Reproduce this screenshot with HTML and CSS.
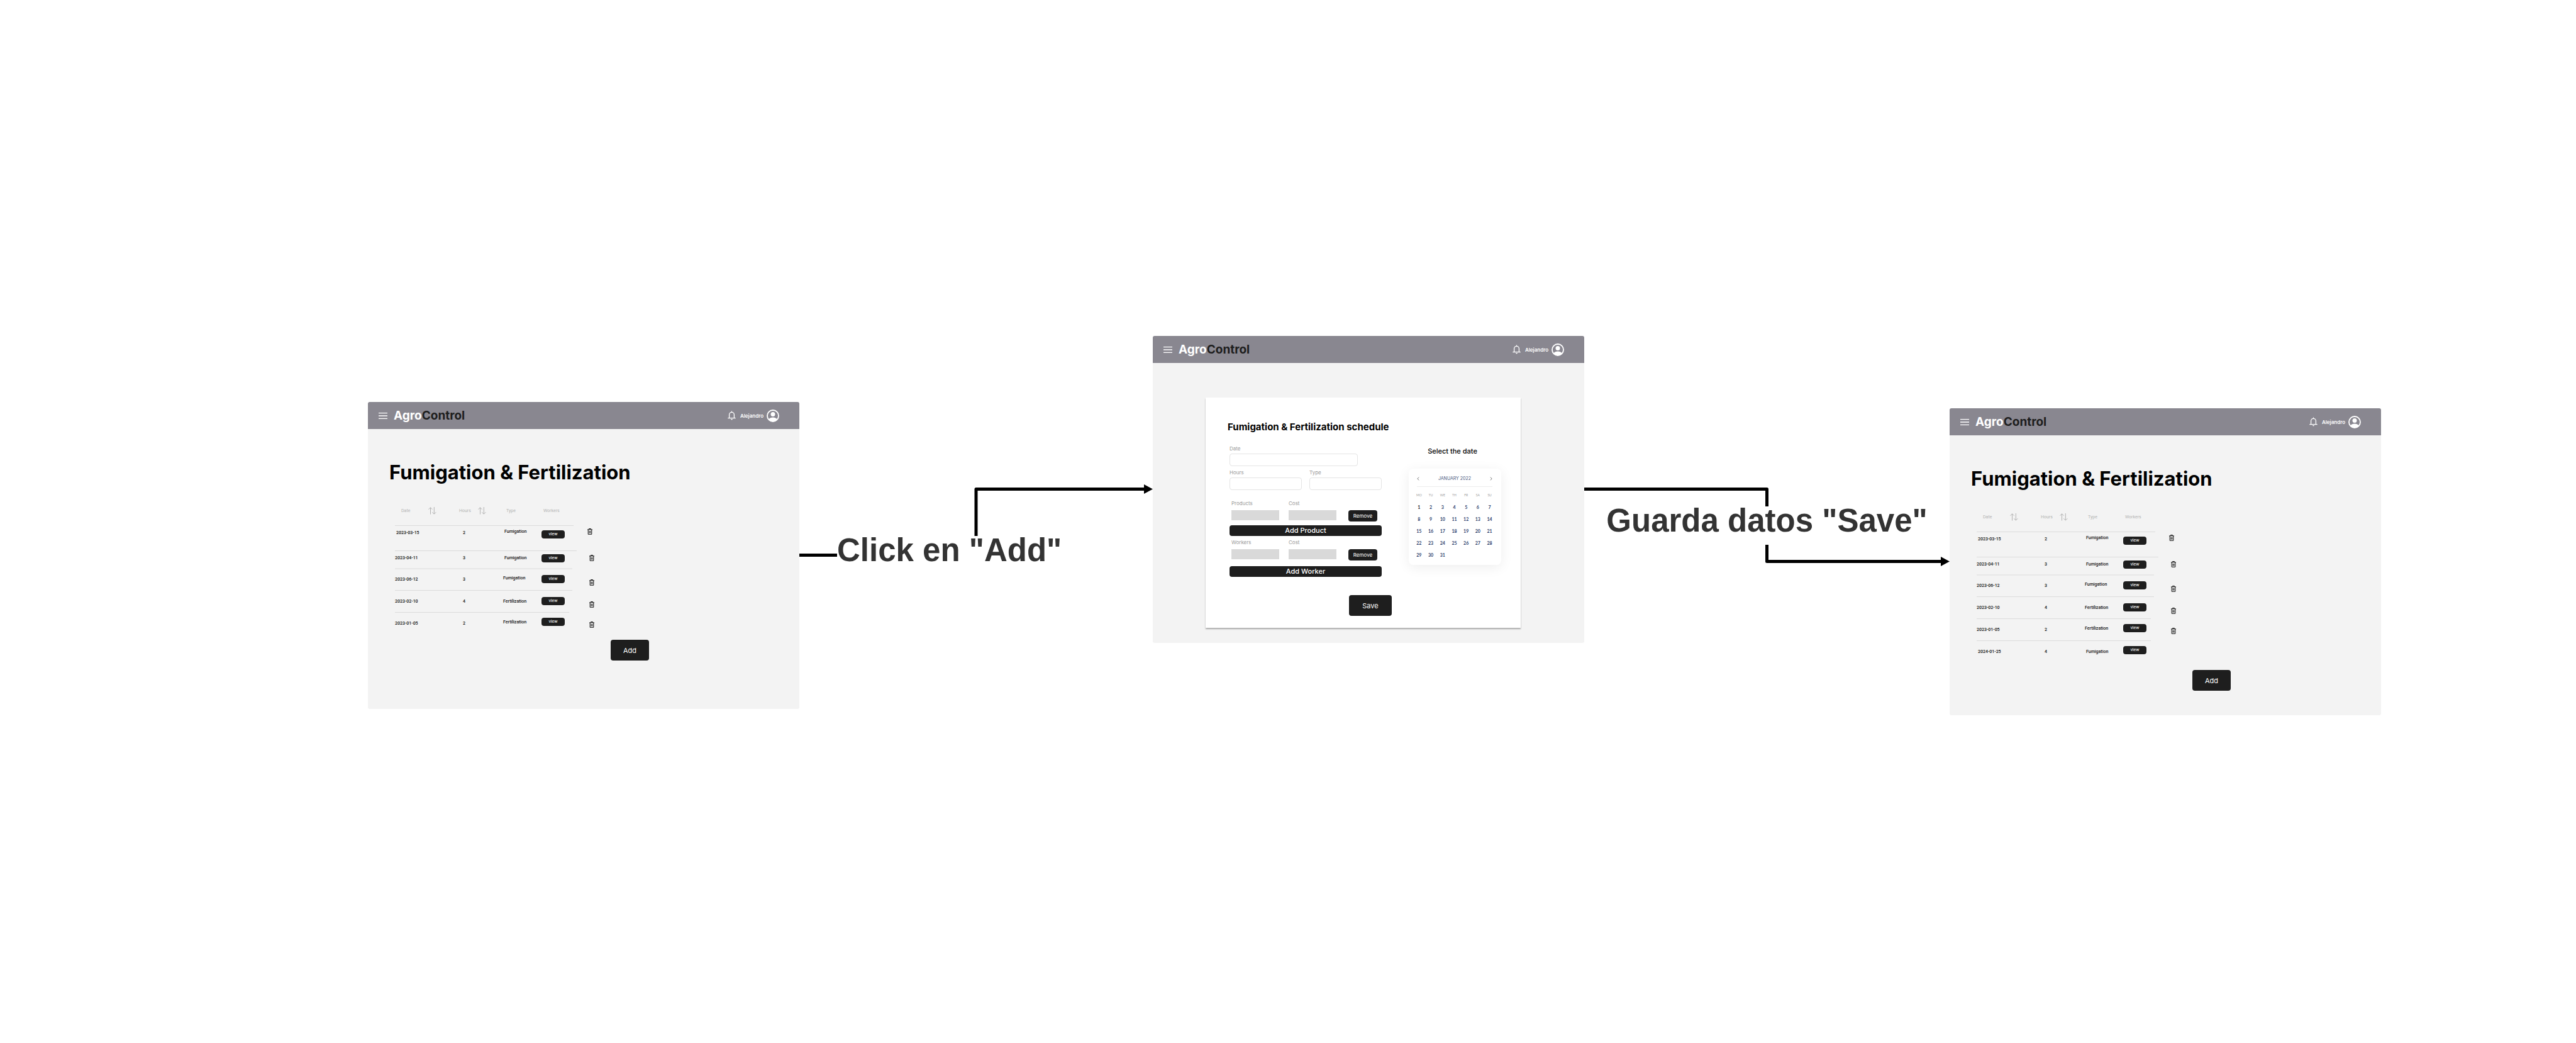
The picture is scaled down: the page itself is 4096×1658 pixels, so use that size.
FILE: index.html
```html
<!DOCTYPE html>
<html lang="en">
<head>
<meta charset="utf-8">
<title>AgroControl – Fumigation &amp; Fertilization flow</title>
<link rel="stylesheet" href="styles.css">
</head>
<body>
<svg class="sprite" aria-hidden="true">
  <symbol id="menu" viewBox="0 0 14 10"><path d="M0 .7h14M0 5h14M0 9.300h14" stroke="currentColor" stroke-width="1.300" fill="none"/></symbol>
  <symbol id="bell" viewBox="0 0 13 15"><path d="M2.6 11.6V6.2a3.9 3.9 0 0 1 7.8 0v5.4M.3 11.7h12.4M6.5 2.2V.4" stroke="currentColor" stroke-width="1.3" fill="none"/><path d="M5.1 13h2.8a1.4 1.4 0 0 1-2.8 0z" fill="currentColor"/></symbol>
  <symbol id="user" viewBox="0 0 20 20"><circle cx="10" cy="10" r="9" fill="none" stroke="currentColor" stroke-width="1.8"/><circle cx="10" cy="7.6" r="3.5" fill="currentColor"/><path d="M3.2 15.6c1.6-2 4-3 6.8-3s5.200 1 6.800 3A9 9 0 0 1 10 19a9 9 0 0 1-6.800-3.400z" fill="currentColor"/></symbol>
  <symbol id="sort" viewBox="0 0 13 12"><path d="M3.500 11.600V.8M.5 3.800l3-3 3 3M9.300 0v11M6.300 8.200l3 3 3-3" stroke="currentColor" stroke-width="1" fill="none"/></symbol>
  <symbol id="trash" viewBox="0 0 8 10"><path d="M0 1.900h8M2.500 1.600V.5h3v1.100M1.200 2v7.300h5.600V2M3.100 4v3.600M4.900 4v3.600" stroke="currentColor" stroke-width="1" fill="none"/></symbol>
</svg>

<main class="canvas">
  <section class="screen screen-list">
    <header class="topbar">
      <button class="icon-btn" type="button" aria-label="Menu"><svg class="menu"><use href="#menu"/></svg></button>
      <a class="brand" href="#">Agro<span>Control</span></a>
      <svg class="bell"><use href="#bell"/></svg>
      <span class="user-name">Alejandro</span>
      <svg class="avatar"><use href="#user"/></svg>
    </header>
    <h1 class="title">Fumigation &amp; Fertilization</h1>
    <table class="records">
      <colgroup><col class="c-date"><col class="c-hours"><col class="c-type"><col class="c-workers"><col class="c-del"></colgroup>
      <thead><tr>
        <th class="h-date"><span>Date</span><svg class="sort"><use href="#sort"/></svg></th>
        <th class="h-hours"><span>Hours</span><svg class="sort"><use href="#sort"/></svg></th>
        <th class="h-type">Type</th><th class="h-workers">Workers</th><td></td>
      </tr></thead>
      <tbody>
        <tr class="first"><td class="in">2023-03-15</td><td>2</td><td class="in raise">Fumigation</td><td class="drop"><button class="view" type="button">view</button></td><td class="raise"><button class="icon-btn" type="button" aria-label="Delete"><svg class="trash"><use href="#trash"/></svg></button></td></tr>
        <tr class="second"><td>2023-04-11</td><td>3</td><td class="in">Fumigation</td><td><button class="view" type="button">view</button></td><td class="in"><button class="icon-btn" type="button" aria-label="Delete"><svg class="trash"><use href="#trash"/></svg></button></td></tr>
        <tr class="soft"><td>2023-06-12</td><td>3</td><td class="raise">Fumigation</td><td><button class="view" type="button">view</button></td><td class="in sink"><button class="icon-btn" type="button" aria-label="Delete"><svg class="trash"><use href="#trash"/></svg></button></td></tr>
        <tr><td>2023-02-10</td><td>4</td><td>Fertilization</td><td><button class="view" type="button">view</button></td><td class="in sink"><button class="icon-btn" type="button" aria-label="Delete"><svg class="trash"><use href="#trash"/></svg></button></td></tr>
        <tr class="short"><td>2023-01-05</td><td>2</td><td class="raise">Fertilization</td><td class="raise"><button class="view" type="button">view</button></td><td class="in drop"><button class="icon-btn" type="button" aria-label="Delete"><svg class="trash"><use href="#trash"/></svg></button></td></tr>
      </tbody>
    </table>
    <button class="primary add" type="button">Add</button>
  </section>

  <div class="connector">
    <svg class="wire" aria-hidden="true">
      <line x1="0" y1="122.500" x2="50%" y2="122.500"/>
      <line class="round" x1="50%" y1="17.500" x2="50%" y2="122.500"/>
      <line x1="50%" y1="17.500" x2="99%" y2="17.500"/>
      <svg x="100%" overflow="visible"><path d="M-14 10L0 17.500L-14 25z"/></svg>
    </svg>
    <p class="label label-add">Click en "Add"</p>
  </div>

  <section class="screen screen-form">
    <header class="topbar">
      <button class="icon-btn" type="button" aria-label="Menu"><svg class="menu"><use href="#menu"/></svg></button>
      <a class="brand" href="#">Agro<span>Control</span></a>
      <svg class="bell"><use href="#bell"/></svg>
      <span class="user-name">Alejandro</span>
      <svg class="avatar"><use href="#user"/></svg>
    </header>
    <form class="card">
      <h2>Fumigation &amp; Fertilization schedule</h2>
      <div class="columns">
        <div class="fields">
          <div class="field wide"><label for="date">Date</label><input id="date" type="text"></div>
          <div class="pair">
            <div class="field"><label for="hours">Hours</label><input id="hours" type="text"></div>
            <div class="field"><label for="type">Type</label><input id="type" type="text"></div>
          </div>
          <div class="line line-products">
            <div class="item"><label for="product">Products</label><input id="product" type="text"></div>
            <div class="item"><label for="product-cost">Cost</label><input id="product-cost" type="text"></div>
            <button class="remove" type="button">Remove</button>
          </div>
          <button class="bar bar-product" type="button">Add Product</button>
          <div class="line">
            <div class="item"><label for="worker">Workers</label><input id="worker" type="text"></div>
            <div class="item"><label for="worker-cost">Cost</label><input id="worker-cost" type="text"></div>
            <button class="remove" type="button">Remove</button>
          </div>
          <button class="bar bar-worker" type="button">Add Worker</button>
        </div>
        <div class="side">
          <h3>Select the date</h3>
          <div class="calendar">
            <div class="month">
              <button class="icon-btn" type="button" aria-label="Previous month"><svg class="chev" viewBox="0 0 4 6"><path d="M3.200.6L.8 3l2.400 2.400"/></svg></button>
              <span>JANUARY 2022</span>
              <button class="icon-btn" type="button" aria-label="Next month"><svg class="chev" viewBox="0 0 4 6"><path d="M.8.6L3.200 3L.8 5.400"/></svg></button>
            </div>
            <table class="days">
              <thead><tr><th>MO</th><th>TU</th><th>WE</th><th>TH</th><th>FR</th><th>SA</th><th>SU</th></tr></thead>
              <tbody>
                <tr><td class="today">1</td><td>2</td><td>3</td><td>4</td><td>5</td><td>6</td><td>7</td></tr>
                <tr><td>8</td><td>9</td><td>10</td><td>11</td><td>12</td><td>13</td><td>14</td></tr>
                <tr><td>15</td><td>16</td><td>17</td><td>18</td><td>19</td><td>20</td><td>21</td></tr>
                <tr><td>22</td><td>23</td><td>24</td><td>25</td><td>26</td><td>27</td><td>28</td></tr>
                <tr><td>29</td><td>30</td><td>31</td><td></td><td></td><td></td><td></td></tr>
              </tbody>
            </table>
          </div>
        </div>
      </div>
      <button class="primary save" type="button">Save</button>
    </form>
  </section>

  <div class="connector">
    <svg class="wire" aria-hidden="true">
      <line x1="0" y1="17.500" x2="50%" y2="17.500"/>
      <line class="round" x1="50%" y1="17.500" x2="50%" y2="132.500"/>
      <line x1="50%" y1="132.500" x2="99%" y2="132.500"/>
      <svg x="100%" overflow="visible"><path d="M-14 125L0 132.500L-14 140z"/></svg>
    </svg>
    <p class="label label-save">Guarda datos "Save"</p>
  </div>

  <section class="screen screen-result">
    <header class="topbar">
      <button class="icon-btn" type="button" aria-label="Menu"><svg class="menu"><use href="#menu"/></svg></button>
      <a class="brand" href="#">Agro<span>Control</span></a>
      <svg class="bell"><use href="#bell"/></svg>
      <span class="user-name">Alejandro</span>
      <svg class="avatar"><use href="#user"/></svg>
    </header>
    <h1 class="title">Fumigation &amp; Fertilization</h1>
    <table class="records">
      <colgroup><col class="c-date"><col class="c-hours"><col class="c-type"><col class="c-workers"><col class="c-del"></colgroup>
      <thead><tr>
        <th class="h-date"><span>Date</span><svg class="sort"><use href="#sort"/></svg></th>
        <th class="h-hours"><span>Hours</span><svg class="sort"><use href="#sort"/></svg></th>
        <th class="h-type">Type</th><th class="h-workers">Workers</th><td></td>
      </tr></thead>
      <tbody>
        <tr class="first"><td class="in">2023-03-15</td><td>2</td><td class="in raise">Fumigation</td><td class="drop"><button class="view" type="button">view</button></td><td class="raise"><button class="icon-btn" type="button" aria-label="Delete"><svg class="trash"><use href="#trash"/></svg></button></td></tr>
        <tr class="second"><td>2023-04-11</td><td>3</td><td class="in">Fumigation</td><td><button class="view" type="button">view</button></td><td class="in"><button class="icon-btn" type="button" aria-label="Delete"><svg class="trash"><use href="#trash"/></svg></button></td></tr>
        <tr class="soft"><td>2023-06-12</td><td>3</td><td class="raise">Fumigation</td><td><button class="view" type="button">view</button></td><td class="in sink"><button class="icon-btn" type="button" aria-label="Delete"><svg class="trash"><use href="#trash"/></svg></button></td></tr>
        <tr><td>2023-02-10</td><td>4</td><td>Fertilization</td><td><button class="view" type="button">view</button></td><td class="in sink"><button class="icon-btn" type="button" aria-label="Delete"><svg class="trash"><use href="#trash"/></svg></button></td></tr>
        <tr class="short"><td>2023-01-05</td><td>2</td><td class="raise">Fertilization</td><td class="raise"><button class="view" type="button">view</button></td><td class="in drop"><button class="icon-btn" type="button" aria-label="Delete"><svg class="trash"><use href="#trash"/></svg></button></td></tr>
        <tr class="short"><td class="in">2024-01-25</td><td>4</td><td class="in">Fumigation</td><td class="raise"><button class="view" type="button">view</button></td><td></td></tr>
      </tbody>
    </table>
    <button class="primary add" type="button">Add</button>
  </section>
</main>
</body>
</html>
```
FILE: styles.css
```css
* { box-sizing: border-box; }

body {
  margin: 0;
  background: #fff;
  color: #000;
  font-family: Inter, "Liberation Sans", sans-serif;
}

h1, h2, h3, p { margin: 0; }
button { padding: 0; border: 0; font-family: inherit; }
svg { display: block; }
.sprite { position: absolute; width: 0; height: 0; }
.icon-btn { display: block; background: none; color: inherit; }

/* Flow board: three screens joined by elastic connectors */
.canvas {
  display: grid;
  grid-template-columns: 585fr 686px 562fr 686px 581fr 686px 310fr;
  align-items: start;
  min-height: 100vh;
}

.screen {
  min-height: 488px;
  padding-bottom: 19px;
  background: #f3f3f3;
  border-radius: 3px;
}
.screen-list { grid-column: 2; margin-top: 639px; }
.screen-form { grid-column: 4; margin-top: 534px; }
.screen-result { grid-column: 6; margin-top: 649px; }

.connector { display: grid; margin-top: 760px; }
.wire, .label { grid-area: 1 / 1; }
.wire { width: 100%; height: 160px; }
.wire line { stroke: #000; stroke-width: 5; }
.wire .round { stroke-linecap: round; }
.label {
  align-self: start;
  padding-bottom: 16px;
  background: #fff;
  color: #333;
  font: bold 51px/45px "Liberation Sans", Arial, sans-serif;
  white-space: nowrap;
}
.label-add { justify-self: start; margin: 92px 0 0 60px; }
.label-save { justify-self: center; margin-top: 45px; }

/* Top bar */
.topbar {
  display: flex;
  align-items: center;
  height: 43px;
  padding: 0 32px 0 17px;
  border-radius: 3px 3px 0 0;
  background: #898790;
  color: #fff;
}
.menu { width: 14px; height: 10px; }
.brand {
  margin: 0 auto 0 10px;
  color: #fff;
  font-size: 19px;
  font-weight: 700;
  line-height: 24px;
  text-decoration: none;
}
.brand span { color: #1e1e1e; }
.bell { width: 13px; height: 15px; }
.user-name { margin: 0 5px 0 7px; font-size: 8px; font-weight: 600; line-height: 10px; }
.avatar { width: 20px; height: 20px; }

/* Records list */
.title {
  margin: 51px 0 35px 34px;
  font-size: 31px;
  font-weight: 700;
  line-height: 36px;
}
.records {
  width: 328px;
  margin-left: 43px;
  table-layout: fixed;
  border-collapse: collapse;
  font: 500 7px/10px Roboto, sans-serif;
  color: #111;
}
.records th, .records td { padding: 0; text-align: left; }
.c-date { width: 83px; }
.c-hours { width: 89px; }
.c-type { width: 61px; }
.c-workers { width: 44px; }
.c-del { width: 51px; }

.records thead tr { height: 31px; }
.records th { vertical-align: top; color: #b3b3b3; font-weight: 400; line-height: 16px; }
.records th span { display: inline-block; }
.records .sort { display: inline-block; width: 13px; height: 12px; vertical-align: middle; }
.records .h-date { padding-left: 10px; }
.h-date .sort { margin-left: 29px; }
.records .h-hours { padding-left: 19px; white-space: nowrap; }
.h-hours .sort { margin-left: 11px; }
.records .h-type { padding-left: 5px; }
.records .h-workers { padding-left: 3px; }

.records tbody tr {
  height: 35px;
  background: linear-gradient(#dcdcdc, #dcdcdc) no-repeat 0 0 / 282px 1px;
}
.records tbody .first { height: 40px; background-size: 284px 1px; }
.records tbody .second { height: 28px; background-size: 289px 1px; }
.records tbody .soft { background: linear-gradient(#e7e7e7, #e7e7e7) no-repeat 0 0 / 282px 2px; }
.records tbody .short { background-size: 277px 1px; }

.records tbody td { vertical-align: middle; }
.records tbody td:nth-child(2) { padding-left: 25px; }
.records tbody td:nth-child(5) { padding-left: 29px; }
.records tbody .in { padding-left: 2px; }
.records tbody .in:nth-child(5) { padding-left: 32px; }
.records .raise { padding-bottom: 4px; }
.records .drop { padding-top: 4px; }
.records .sink { padding-top: 10px; }
.records .first td { padding-bottom: 16px; }
.records .first .raise { padding-bottom: 20px; }
.records .first .drop { padding-top: 0; padding-bottom: 12px; }
.records .second td { padding-bottom: 4px; }

.view {
  display: block;
  width: 37px;
  height: 13px;
  border-radius: 4px;
  background: #1e1e1e;
  color: #fff;
  font-size: 7px;
  line-height: 13px;
}
.trash { width: 8px; height: 10px; }

.primary {
  display: block;
  height: 33px;
  border-radius: 4px;
  background: #1e1e1e;
  color: #fff;
  font-size: 11px;
}
.add { width: 61px; margin-left: 386px; }
.screen-list .add { margin-top: 9px; }
.screen-result .add { margin-top: 12px; }

/* Schedule form */
.card {
  margin: 55px 101px 5px 84px;
  padding: 37px 31px 19px 35px;
  background: #fff;
  box-shadow: 0 2px 2px rgba(0, 0, 0, .3);
}
.card h2 { margin-bottom: 19px; font-size: 15px; font-weight: 700; line-height: 20px; white-space: nowrap; }
.columns { display: flex; justify-content: space-between; padding-left: 3px; }
.fields { width: 242px; }
.fields label { display: block; color: #999; font-size: 8px; line-height: 10px; }
.fields input { display: block; width: 100%; padding: 0 4px; font: inherit; font-size: 8px; }
.field input {
  height: 20px;
  margin-top: 3px;
  border: 1px solid #e4e4e4;
  border-radius: 4px;
  background: #fff;
}
.wide { width: 204px; }
.pair { display: grid; grid-template-columns: 1fr 1fr; gap: 12px; margin-top: 5px; }
.line {
  display: grid;
  grid-template-columns: 76px 80px 46px;
  column-gap: 15px;
  align-items: end;
  margin: 5px 0 0 3px;
}
.line-products { margin-top: 16px; }
.item { height: 34px; }
.fields .item input { width: 76px; height: 16px; margin-top: 6px; border: 0; background: #d9d9d9; }
.remove {
  height: 18px;
  border-radius: 4px;
  background: #1e1e1e;
  color: #fff;
  font-size: 8px;
}
.bar {
  display: block;
  width: 100%;
  height: 17px;
  border-radius: 4px;
  background: #1e1e1e;
  color: #fff;
  font-size: 11px;
  font-weight: 500;
  line-height: 17px;
}
.bar-product { margin-top: 6px; }
.bar-worker { margin-top: 9px; }
.save { width: 68px; margin: 29px 0 0 193px; }

/* Calendar */
.side { width: 147px; padding-top: 2px; }
.side h3 { padding-right: 8px; font-size: 11px; font-weight: 500; line-height: 14px; text-align: center; }
.calendar {
  margin-top: 21px;
  padding: 11px 9px 7px 7px;
  border-radius: 7px;
  background: #fff;
  box-shadow: 0 4px 20px rgba(0, 0, 0, .07);
}
.month {
  display: flex;
  align-items: center;
  justify-content: space-between;
  margin: 0 5px 4px 6px;
  padding-bottom: 7px;
  border-bottom: 1px solid #ececec;
  color: #4a5a82;
  font-size: 7px;
  line-height: 10px;
}
.chev { width: 4px; height: 6px; fill: none; stroke: #777; }
.days {
  width: 100%;
  table-layout: fixed;
  border-collapse: collapse;
  color: #2a3c6b;
  font: bold 7px/10px Lato, sans-serif;
}
.days th, .days td { padding: 0; text-align: center; }
.days thead tr { height: 18px; }
.days tbody tr { height: 19px; }
.days th { color: #a0a0a0; font-size: 5px; font-weight: 400; }
.days .today { color: #222; }
```
